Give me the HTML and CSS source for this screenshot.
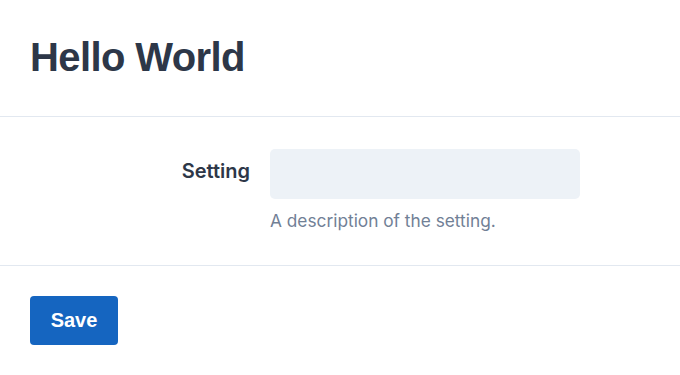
FILE: index.html
```html
<!DOCTYPE html>
<html>
<head>
<meta charset="utf-8">
<link rel="stylesheet" href="styles.css">
</head>
<body>
<header class="page-header">
  <h1 class="title">Hello World</h1>
</header>
<section class="form-section">
  <div class="field">
    <label class="field-label" for="setting">Setting</label>
    <div class="field-control">
      <input class="text-input" id="setting" type="text">
      <p class="help">A description of the setting.</p>
    </div>
  </div>
</section>
<footer class="actions">
  <button class="btn-primary" type="button">Save</button>
</footer>
</body>
</html>
```
FILE: styles.css
```css
* { box-sizing: border-box; }
body {
  margin: 0;
  background: #ffffff;
  font-family: "Inter", "Noto Sans", sans-serif;
  color: #2d3748;
}
.page-header {
  padding: 33px 30px 35px;
  border-bottom: 1px solid #e2e8f0;
}
.title {
  margin: 0;
  font-family: "Liberation Sans", Arial, sans-serif;
  font-weight: 700;
  font-size: 40px;
  line-height: 48px;
  letter-spacing: -0.6px;
  color: #2d3748;
}
.form-section {
  padding: 32px 30px 31px;
  border-bottom: 1px solid #e2e8f0;
}
.field {
  display: grid;
  grid-template-columns: 220px 310px;
  column-gap: 20px;
  align-items: start;
}
.field-label {
  text-align: right;
  font-size: 20px;
  font-weight: 600;
  line-height: 45px;
  color: #2d3748;
}
.text-input {
  display: block;
  width: 310px;
  height: 50px;
  border: 0;
  border-radius: 5px;
  background: #edf2f7;
  outline: none;
}
.help {
  margin: 9px 0 0;
  font-size: 17.3px;
  line-height: 26px;
  color: #718096;
}
.actions {
  padding: 30px 30px;
}
.btn-primary {
  border: 0;
  border-radius: 4px;
  background: #1565c0;
  color: #ffffff;
  font-family: "Liberation Sans", Arial, sans-serif;
  font-weight: 700;
  font-size: 20px;
  line-height: 25px;
  padding: 12px 20px 12px;
  width: 88px;
  height: 49px;
}
```
